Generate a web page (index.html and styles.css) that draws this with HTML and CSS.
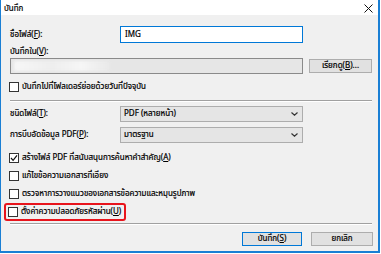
FILE: index.html
```html
<!DOCTYPE html>
<html lang="th">
<head>
<meta charset="utf-8">
<link rel="stylesheet" href="styles.css">
</head>
<body>
<div class="window">
  <div class="titlebar">
    <span class="title">บันทึก</span>
    <svg class="close" width="9" height="9" viewBox="0 0 9 9"><path d="M0.5 0.5L8.5 8.5M8.5 0.5L0.5 8.5" stroke="#111" stroke-width="1"/></svg>
  </div>
  <div class="content">
    <div class="field-row first">
      <span class="lbl">ชื่อไฟล์(<u>F</u>):</span>
      <div class="input focused">IMG</div>
    </div>
    <div class="lbl-line">บันทึกใน(<u>V</u>):</div>
    <div class="path-row">
      <div class="input disabled"><span class="blurred"></span></div>
      <div class="btn browse">เรียกดู(<u>B</u>)...</div>
    </div>
    <div class="check-row sub">
      <span class="box"></span><span>บันทึกไปที่โฟลเดอร์ย่อยด้วยวันที่ปัจจุบัน</span>
    </div>
    <div class="sep sep1"></div>
    <div class="field-row sel1">
      <span class="lbl">ชนิดไฟล์(<u>T</u>):</span>
      <div class="select"><span>PDF (หลายหน้า)</span><svg width="7" height="4" viewBox="0 0 7 4"><path d="M0.5 0.5L3.5 3.2L6.5 0.5" fill="none" stroke="#333" stroke-width="1.2"/></svg></div>
    </div>
    <div class="field-row sel2">
      <span class="lbl">การบีบอัดข้อมูล PDF(<u>P</u>):</span>
      <div class="select"><span>มาตรฐาน</span><svg width="7" height="4" viewBox="0 0 7 4"><path d="M0.5 0.5L3.5 3.2L6.5 0.5" fill="none" stroke="#333" stroke-width="1.2"/></svg></div>
    </div>
    <div class="checks">
      <div class="check-row">
        <span class="box checked"><svg width="8" height="8" viewBox="0 0 8 8"><path d="M1 4L3.1 6.3L7 1.3" fill="none" stroke="#111" stroke-width="1.2"/></svg></span><span>สร้างไฟล์ PDF ที่สนับสนุนการค้นหาคำสำคัญ(<u>A</u>)</span>
      </div>
      <div class="check-row">
        <span class="box"></span><span>แก้ไขข้อความเอกสารที่เอียง</span>
      </div>
      <div class="check-row">
        <span class="box"></span><span>ตรวจหาการวางแนวของเอกสารข้อความและหมุนรูปภาพ</span>
      </div>
      <div class="highlight">
        <div class="check-row">
          <span class="box"></span><span>ตั้งค่าความปลอดภัยรหัสผ่าน(<u>U</u>)</span>
        </div>
      </div>
    </div>
    <div class="sep sep2"></div>
    <div class="buttons">
      <div class="btn default">บันทึก(<u>S</u>)</div>
      <div class="btn cancel">ยกเลิก</div>
    </div>
  </div>
</div>
</body>
</html>
```
FILE: styles.css
```css
html, body {
  margin: 0;
  padding: 0;
  background: #ffffff;
}
body {
  font-family: Tahoma, "Noto Sans Thai", "Leelawadee UI", "Noto Sans", "DejaVu Sans", sans-serif;
  font-size: 8px;
  color: #000;
  -webkit-text-stroke: 0.2px #000;
}
.window {
  width: 377px;
  height: 251px;
  border-style: solid;
  border-color: #1a7fd4;
  border-width: 0 2px 2px 1px;
  background: #f0f0f0;
  display: flex;
  flex-direction: column;
}
.titlebar {
  height: 15px;
  background: #ffffff;
  display: flex;
  align-items: center;
  justify-content: space-between;
  padding: 0 5px 0 3px;
}
.title {
  line-height: 12px;
  margin-top: 3px;
}
.close {
  display: block;
  margin-top: 2px;
}
.content {
  padding: 0 5px 0 9px;
  display: flex;
  flex-direction: column;
}
u {
  text-decoration: underline;
  text-underline-offset: 1px;
}
.field-row {
  display: grid;
  grid-template-columns: 110px 183px;
  align-items: center;
}
.field-row.first {
  margin-top: 11px;
  height: 17px;
}
.lbl, .lbl-line {
  line-height: 12px;
  white-space: nowrap;
}
.lbl-line {
  margin-top: 3px;
  height: 12px;
}
.input {
  box-sizing: border-box;
  background: #ffffff;
  border: 1px solid #7a7a7a;
  padding-left: 4px;
  display: flex;
  align-items: center;
}
.input.focused {
  height: 17px;
  border-color: #0078d7;
}
.path-row {
  height: 16px;
  display: flex;
  align-items: center;
  gap: 6px;
}
.input.disabled {
  width: 293px;
  height: 16px;
  background: #e6e6e6;
  border-color: #8a8a8a;
  padding: 0;
  overflow: hidden;
}
.blurred {
  display: block;
  margin-left: 3px;
  width: 96px;
  height: 10px;
  background: linear-gradient(90deg, #f7f7f7, #eeeeee 40%, #f6f6f6 70%, #e9e9e9);
  filter: blur(1.5px);
}
.btn {
  box-sizing: border-box;
  height: 14px;
  background: #e1e1e1;
  border: 1px solid #adadad;
  display: flex;
  align-items: center;
  justify-content: center;
  line-height: 12px;
  white-space: nowrap;
}
.browse {
  width: 63px;
}
.check-row {
  display: flex;
  align-items: center;
  height: 12px;
  line-height: 12px;
  white-space: nowrap;
  margin-left: -1px;
}
.check-row.sub {
  margin-top: 7px;
}
.box {
  box-sizing: border-box;
  width: 10px;
  height: 10px;
  border: 1px solid #333333;
  background: #ffffff;
  margin-right: 3px;
  flex: none;
  display: flex;
  align-items: center;
  justify-content: center;
}
.box svg {
  display: block;
}
.sep {
  height: 1px;
  border-bottom: 1px solid #ffffff;
  background: #a0a0a0;
  margin-right: 1px;
}
.sep1 {
  margin-top: 7px;
}
.field-row.sel1 {
  margin-top: 4px;
  height: 16px;
}
.field-row.sel2 {
  margin-top: 5px;
  height: 16px;
}
.select {
  box-sizing: border-box;
  height: 16px;
  background: #e5e5e5;
  border: 1px solid #adadad;
  display: flex;
  align-items: center;
  justify-content: space-between;
  padding: 0 4px 0 3px;
  line-height: 12px;
}
.select svg {
  display: block;
}
.checks {
  margin-top: 9px;
  display: flex;
  flex-direction: column;
  gap: 6px;
}
.highlight {
  margin-top: -3px;
  margin-left: -6px;
  width: 116px;
  height: 14px;
  border: 2px solid #e8141c;
  border-radius: 3px;
  padding-left: 2px;
  display: flex;
  align-items: center;
}
.highlight .check-row {
  margin-left: 0;
}
.sep2 {
  margin-top: 2px;
}
.buttons {
  margin-top: 7px;
  display: flex;
  justify-content: flex-end;
  gap: 9px;
}
.buttons .btn.default {
  width: 60px;
  border-color: #0078d7;
}
.buttons .btn.cancel {
  width: 62px;
}
```
